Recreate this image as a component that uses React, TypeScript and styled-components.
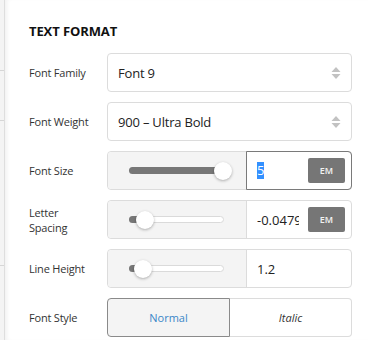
import React from 'react';
import styled, { createGlobalStyle } from 'styled-components';

const GlobalStyle = createGlobalStyle`
  html, body {
    margin: 0;
    padding: 0;
    background: #fff;
    font-family: 'Open Sans', 'Noto Sans', Arial, sans-serif;
  }
`;

function Arrows() {
  return (
    <svg width="10" height="14" viewBox="0 0 10 14">
      <path d="M5 1 L9.5 6 L0.5 6 Z" fill="#c2c2c2" />
      <path d="M5 13 L9.5 8 L0.5 8 Z" fill="#c2c2c2" />
    </svg>
  );
}

function Slider({ value }: { value: number }) {
  return (
    <Track>
      <Fill style={{ width: `${value}%` }} />
      <Thumb style={{ left: `${value}%` }} />
    </Track>
  );
}

function App() {
  return (
    <Page>
      <GlobalStyle />
      <Rail>
        <RailItem h={70} />
        <RailItem h={49} />
        <RailItem h={144} />
        <RailItem h={77} last />
      </Rail>
      <Panel>
        <Title>TEXT FORMAT</Title>
        <Rows>
          <Label>Font Family</Label>
          <Select>
            <span>Font 9</span>
            <Arrows />
          </Select>

          <Label>Font Weight</Label>
          <Select>
            <span>900 – Ultra Bold</span>
            <Arrows />
          </Select>

          <Label>Font Size</Label>
          <Combo>
            <SliderArea>
              <Slider value={100} />
            </SliderArea>
            <InputArea focused>
              <Selected>5</Selected>
              <EmBtn>EM</EmBtn>
            </InputArea>
          </Combo>

          <Label>
            Letter
            <br />
            Spacing
          </Label>
          <Combo>
            <SliderArea>
              <Slider value={16} />
            </SliderArea>
            <InputArea>
              <Value>-0.0479</Value>
              <EmBtn>EM</EmBtn>
            </InputArea>
          </Combo>

          <Label>Line Height</Label>
          <Combo>
            <SliderArea>
              <Slider value={14} />
            </SliderArea>
            <InputArea>
              <Value>1.2</Value>
            </InputArea>
          </Combo>

          <Label>Font Style</Label>
          <Toggle>
            <Segment active>Normal</Segment>
            <Segment italic>Italic</Segment>
          </Toggle>
        </Rows>
      </Panel>
    </Page>
  );
}

export default App;

const Page = styled.div`
  display: flex;
  width: 368px;
  height: 340px;
  overflow: hidden;
`;

const Rail = styled.div`
  width: 4px;
  flex-shrink: 0;
  background: #f4f4f4;
  border-right: 1px solid #dedede;
  display: flex;
  flex-direction: column;
`;

const RailItem = styled.div<{ h: number; last?: boolean }>`
  height: ${(p) => p.h}px;
  flex-shrink: 0;
  border-bottom: ${(p) => (p.last ? 'none' : '1px solid #d6d6d6')};
`;

const Panel = styled.div`
  flex: 1;
  padding: 22px 16px 0 24px;
  background: #fff;
  box-shadow: inset 4px 0 4px -2px rgba(0, 0, 0, 0.06);
`;

const Title = styled.div`
  font-size: 13px;
  font-weight: 700;
  line-height: 18px;
  color: #111;
  letter-spacing: -0.1px;
  margin-bottom: 13px;
`;

const Rows = styled.div`
  display: grid;
  grid-template-columns: 78px 245px;
  grid-auto-rows: 39px;
  row-gap: 10px;
`;

const Label = styled.div`
  display: flex;
  align-items: center;
  font-size: 11px;
  line-height: 15px;
  color: #333;
  letter-spacing: -0.2px;
`;

const Select = styled.div`
  box-sizing: border-box;
  border: 1px solid #dcdcdc;
  border-radius: 4px;
  display: flex;
  align-items: center;
  justify-content: space-between;
  padding: 0 10px 0 10px;
  font-size: 13px;
  color: #222;
  letter-spacing: -0.2px;
`;

const Combo = styled.div`
  box-sizing: border-box;
  border: 1px solid #dcdcdc;
  border-radius: 4px;
  display: flex;
`;

const SliderArea = styled.div`
  width: 139px;
  flex-shrink: 0;
  background: #f4f4f4;
  border-right: 1px solid #dcdcdc;
  border-radius: 4px 0 0 4px;
  display: flex;
  align-items: center;
  padding-left: 21px;
  box-sizing: border-box;
`;

const Track = styled.div`
  position: relative;
  width: 95px;
  height: 7px;
  box-sizing: border-box;
  border: 1px solid #dadada;
  border-radius: 4px;
  background: #fff;
`;

const Fill = styled.div`
  position: absolute;
  left: -1px;
  top: -1px;
  bottom: -1px;
  background: #777;
  border-radius: 4px;
`;

const Thumb = styled.div`
  position: absolute;
  top: 50%;
  width: 18px;
  height: 18px;
  margin: -9px 0 0 -9px;
  border-radius: 50%;
  background: #fff;
  box-shadow: 0 1px 3px rgba(0, 0, 0, 0.3);
`;

const InputArea = styled.div<{ focused?: boolean }>`
  flex: 1;
  display: flex;
  align-items: center;
  justify-content: space-between;
  padding: 0 6px 0 10px;
  margin: ${(p) => (p.focused ? '-1px -1px -1px -1px' : '0')};
  border: ${(p) => (p.focused ? '1px solid #7a7a7a' : 'none')};
  border-radius: 0 4px 4px 0;
  font-size: 13px;
  color: #222;
  overflow: hidden;
`;

const Selected = styled.span`
  background: #3390ff;
  color: #fff;
  line-height: 17px;
`;

const Value = styled.span`
  display: block;
  white-space: nowrap;
  overflow: hidden;
  width: 42px;
`;

const EmBtn = styled.div`
  flex-shrink: 0;
  width: 37px;
  height: 25px;
  border-radius: 2px;
  background: #767676;
  color: #f2f2f2;
  font-size: 9px;
  font-weight: 600;
  display: flex;
  align-items: center;
  justify-content: center;
`;

const Toggle = styled.div`
  display: flex;
`;

const Segment = styled.div<{ active?: boolean; italic?: boolean }>`
  flex: 1;
  display: flex;
  align-items: center;
  justify-content: center;
  font-size: 11px;
  font-style: ${(p) => (p.italic ? 'italic' : 'normal')};
  color: ${(p) => (p.active ? '#3a87c8' : '#333')};
  background: ${(p) => (p.active ? '#f4f4f4' : '#fff')};
  border: 1px solid ${(p) => (p.active ? '#8a8a8a' : '#dcdcdc')};
  border-left: ${(p) => (p.active ? '1px solid #8a8a8a' : 'none')};
  border-radius: ${(p) => (p.active ? '4px 0 0 4px' : '0 4px 4px 0')};
`;
